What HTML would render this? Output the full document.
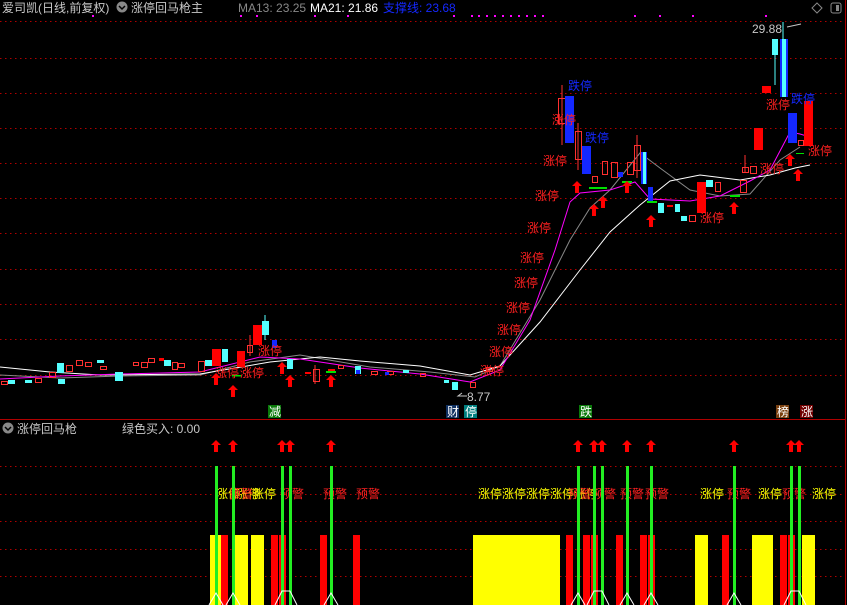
<!DOCTYPE html>
<html><head><meta charset="utf-8"><style>
html,body{margin:0;padding:0;background:#000;width:847px;height:605px;overflow:hidden}
svg{display:block}
text{font-family:"Liberation Sans","Noto Sans CJK SC",sans-serif;font-size:12px}
</style></head><body>
<svg width="847" height="605" viewBox="0 0 847 605">
<g stroke="#b00000" stroke-dasharray="1.5,3.5" stroke-width="1">
<line x1="0" y1="21.5" x2="845" y2="21.5"/><line x1="0" y1="58.5" x2="845" y2="58.5"/><line x1="0" y1="93.5" x2="845" y2="93.5"/><line x1="0" y1="128.5" x2="845" y2="128.5"/><line x1="0" y1="163.5" x2="845" y2="163.5"/><line x1="0" y1="198.5" x2="845" y2="198.5"/><line x1="0" y1="233.5" x2="845" y2="233.5"/><line x1="0" y1="269.5" x2="845" y2="269.5"/><line x1="0" y1="304.5" x2="845" y2="304.5"/><line x1="0" y1="339.5" x2="845" y2="339.5"/><line x1="0" y1="375.5" x2="845" y2="375.5"/>
<line x1="0" y1="466.5" x2="845" y2="466.5"/><line x1="0" y1="494.5" x2="845" y2="494.5"/><line x1="0" y1="521.5" x2="845" y2="521.5"/><line x1="0" y1="549.5" x2="845" y2="549.5"/><line x1="0" y1="576.5" x2="845" y2="576.5"/>
</g>
<line x1="0" y1="419.5" x2="845" y2="419.5" stroke="#b00000"/>
<line x1="845.5" y1="0" x2="845.5" y2="605" stroke="#b00000"/>
<!-- header -->
<text x="2" y="12" fill="#c8c8c8">爱司凯(日线,前复权)</text>
<circle cx="122" cy="7" r="5.5" fill="#888"/><path d="M119 6l3 3 3-3" stroke="#000" stroke-width="1.5" fill="none"/>
<text x="131" y="12" fill="#c8c8c8">涨停回马枪主</text>
<text x="238" y="12" fill="#888">MA13: 23.25</text>
<text x="310" y="12" fill="#fff">MA21: 21.86</text>
<text x="383" y="12" fill="#1428ff">支撑线: 23.68</text>
<g fill="#ff00ff">
<rect x="92" y="15" width="2" height="2"/><rect x="240" y="15" width="2" height="2"/><rect x="256" y="15" width="2" height="2"/><rect x="314" y="15" width="2" height="2"/><rect x="347" y="15" width="2" height="2"/><rect x="453" y="15" width="2" height="2"/><rect x="471" y="15" width="2" height="2"/><rect x="478" y="15" width="2" height="2"/><rect x="486" y="15" width="2" height="2"/><rect x="494" y="15" width="2" height="2"/><rect x="502" y="15" width="2" height="2"/><rect x="510" y="15" width="2" height="2"/><rect x="518" y="15" width="2" height="2"/><rect x="526" y="15" width="2" height="2"/><rect x="534" y="15" width="2" height="2"/><rect x="542" y="15" width="2" height="2"/><rect x="634" y="15" width="2" height="2"/><rect x="659" y="15" width="2" height="2"/><rect x="692" y="15" width="2" height="2"/><rect x="765" y="15" width="2" height="2"/>
</g>
<path d="M817 3l5 5-5 5-5-5z" stroke="#888" fill="none"/>
<rect x="831" y="3" width="10" height="10" rx="2" stroke="#888" fill="none"/><rect x="836" y="5" width="3" height="6" fill="#888"/>
<!-- MAs -->
<polyline fill="none" stroke="#888" points="0,375 60,378 120,376 200,375 250,362 300,355 370,367 430,372 475,377 500,366 540,300 570,240 590,208 610,190 640,153 660,168 690,190 720,196 750,194 780,160 800,147"/>
<polyline fill="none" stroke="#fff" points="0,367 50,372 100,375 200,374 270,362 320,357 360,361 420,366 470,375 500,366 540,322 580,270 610,232 640,205 670,181 700,175 740,180 770,175 795,168 810,165"/>
<polyline fill="none" stroke="#ff00ff" points="0,379 60,376 120,374 200,372 260,357 300,359 360,368 420,374 470,382 500,370 530,320 555,250 570,202 580,193 610,190 635,182 650,199 690,201 720,196 750,181 770,170 790,132 800,134 810,137"/>
<!-- candles left -->
<g fill="#55ffff">
<rect x="8" y="380" width="7" height="4"/><rect x="25" y="380" width="7" height="3"/><rect x="58" y="379" width="7" height="5"/><rect x="115" y="372" width="8" height="9"/><rect x="165" y="362" width="6" height="2"/><rect x="222" y="349" width="6" height="13"/><rect x="262" y="321" width="7" height="14"/><rect x="287" y="359" width="6" height="10"/><rect x="355" y="366" width="6" height="8"/><rect x="403" y="370" width="6" height="3"/><rect x="452" y="382" width="6" height="8"/><rect x="444" y="380" width="5" height="3"/>
<rect x="57" y="363" width="7" height="10"/><rect x="97" y="360" width="7" height="3"/><rect x="164" y="360" width="7" height="6"/><rect x="205" y="360" width="7" height="6"/>
</g>
<g fill="none" stroke="#ff3030">
<rect x="1.5" y="381.5" width="6" height="3"/><rect x="35.5" y="378.5" width="6" height="4"/><rect x="49.5" y="372.5" width="6" height="5"/><rect x="66.5" y="365.5" width="6" height="6"/><rect x="76.5" y="360.5" width="6" height="5"/><rect x="85.5" y="362.5" width="6" height="4"/><rect x="100.5" y="366.5" width="6" height="3"/><rect x="133.5" y="362.5" width="5" height="3"/><rect x="141.5" y="362.5" width="6" height="5"/><rect x="148.5" y="358.5" width="6" height="4"/><rect x="172.5" y="362.5" width="5" height="7"/><rect x="178.5" y="363.5" width="6" height="4"/><rect x="198.5" y="361.5" width="6" height="10"/><rect x="247.5" y="345.5" width="5" height="7"/><rect x="313.5" y="369.5" width="6" height="12"/><rect x="338.5" y="365.5" width="5" height="3"/><rect x="371.5" y="371.5" width="6" height="3"/><rect x="387.5" y="371.5" width="6" height="3"/><rect x="420.5" y="373.5" width="5" height="3"/><rect x="470.5" y="382.5" width="5" height="5"/><rect x="486.5" y="367.5" width="6" height="4"/>
<line x1="250" y1="335" x2="250" y2="356"/><line x1="315" y1="365" x2="315" y2="384"/>
</g>
<g fill="#ff0000">
<rect x="212" y="349" width="9" height="17"/><rect x="237" y="351" width="8" height="16"/><rect x="253" y="325" width="9" height="20"/><rect x="305" y="372" width="6" height="2"/><rect x="328" y="369" width="7" height="2"/><rect x="159" y="358" width="5" height="3"/>
</g>
<g fill="#1428ff"><rect x="272" y="340" width="5" height="8"/><rect x="356" y="370" width="4" height="4"/><rect x="385" y="372" width="4" height="3"/></g>
<line x1="265" y1="315" x2="265" y2="340" stroke="#55ffff"/>
<!-- candles right -->
<g fill="none" stroke="#ff3030">
<rect x="558.5" y="98.5" width="7" height="25"/><line x1="562" y1="85" x2="562" y2="145"/>
<rect x="575.5" y="131.5" width="6" height="28"/><line x1="578" y1="123" x2="578" y2="170"/>
<rect x="592.5" y="176.5" width="5" height="6"/><rect x="602.5" y="161.5" width="5" height="13"/><rect x="611.5" y="162.5" width="6" height="15"/><rect x="627.5" y="162.5" width="6" height="12"/><rect x="634.5" y="145.5" width="6" height="25"/><line x1="637" y1="135" x2="637" y2="178"/>
<rect x="689.5" y="215.5" width="6" height="6"/><rect x="715.5" y="182.5" width="5" height="9"/><rect x="740.5" y="180.5" width="6" height="12"/><rect x="750.5" y="166.5" width="6" height="7"/><rect x="798.5" y="140.5" width="5" height="5"/><rect x="742.5" y="167.5" width="6" height="5"/><line x1="745" y1="155" x2="745" y2="172"/>
</g>
<g fill="#ff0000">
<rect x="697" y="182" width="9" height="31"/><rect x="754" y="128" width="9" height="22"/><rect x="762" y="86" width="9" height="7"/><rect x="804" y="101" width="9" height="45"/><rect x="667" y="205" width="6" height="2"/>
</g>
<g fill="#1428ff">
<rect x="565" y="96" width="9" height="47"/><rect x="582" y="146" width="9" height="28"/><rect x="618" y="172" width="5" height="5"/><rect x="641" y="152" width="6" height="32"/><rect x="648" y="187" width="5" height="16"/><rect x="788" y="113" width="9" height="30"/>
</g>
<g fill="#55ffff">
<rect x="643" y="152" width="3" height="32"/><rect x="658" y="203" width="6" height="10"/><rect x="675" y="204" width="5" height="8"/><rect x="681" y="216" width="6" height="5"/><rect x="706" y="180" width="7" height="7"/><rect x="772" y="39" width="6" height="16"/><rect x="782" y="39" width="4" height="58"/>
<line x1="783" y1="22" x2="783" y2="40" stroke="#55ffff"/><line x1="775" y1="55" x2="775" y2="85" stroke="#55ffff"/>
</g>
<rect x="780" y="39" width="2" height="58" fill="#1428ff"/><rect x="786" y="39" width="2" height="58" fill="#1428ff"/>
<g fill="#00e000"><rect x="589" y="187" width="18" height="2"/><rect x="622" y="181" width="10" height="2"/><rect x="647" y="201" width="10" height="2"/><rect x="730" y="195" width="10" height="2"/><rect x="232" y="375" width="9" height="1.5"/><rect x="326" y="371" width="10" height="2"/><rect x="796" y="153" width="8" height="1"/></g>
<text x="752" y="33" fill="#c8c8c8">29.88</text><path d="M787 27l14-3" stroke="#c8c8c8" fill="none"/>
<text x="467" y="401" fill="#c8c8c8">8.77</text><path d="M467 396h-9l4-3" stroke="#c8c8c8" fill="none"/>
<!-- labels 涨停 -->
<g fill="#ff2020">
<text x="552" y="124">涨停</text><text x="543" y="165">涨停</text><text x="535" y="200">涨停</text><text x="527" y="232">涨停</text><text x="520" y="262">涨停</text><text x="514" y="287">涨停</text><text x="506" y="312">涨停</text><text x="497" y="334">涨停</text><text x="489" y="356">涨停</text><text x="480" y="375">涨停</text>
<text x="700" y="222">涨停</text><text x="766" y="109">涨停</text><text x="760" y="173">涨停</text><text x="808" y="155">涨停</text>
<text x="215" y="377">涨停</text><text x="240" y="377">涨停</text><text x="258" y="355">涨停</text>
</g>
<g fill="#1428ff"><text x="568" y="90">跌停</text><text x="585" y="142">跌停</text><text x="791" y="103">跌停</text></g>
<!-- up arrows main -->
<g fill="#ff0000">
<path d="M577 181l5 5h-3v7h-4v-7h-3z"/><path d="M603 196l5 5h-3v7h-4v-7h-3z"/><path d="M594 204l5 5h-3v7h-4v-7h-3z"/><path d="M627 181l5 5h-3v7h-4v-7h-3z"/><path d="M651 215l5 5h-3v7h-4v-7h-3z"/><path d="M734 202l5 5h-3v7h-4v-7h-3z"/><path d="M790 154l5 5h-3v7h-4v-7h-3z"/><path d="M798 169l5 5h-3v7h-4v-7h-3z"/>
<path d="M216 373l5 5h-3v7h-4v-7h-3z"/><path d="M233 385l5 5h-3v7h-4v-7h-3z"/><path d="M282 362l5 5h-3v7h-4v-7h-3z"/><path d="M290 375l5 5h-3v7h-4v-7h-3z"/><path d="M331 375l5 5h-3v7h-4v-7h-3z"/>
</g>
<!-- bottom label boxes -->
<rect x="268" y="405" width="13" height="13" fill="#0a7a0a"/><text x="269" y="416" fill="#fff">减</text>
<rect x="446" y="405" width="13" height="13" fill="#103060"/><text x="447" y="416" fill="#fff">财</text>
<rect x="464" y="405" width="13" height="13" fill="#008080"/><text x="465" y="416" fill="#fff">停</text>
<rect x="579" y="405" width="13" height="13" fill="#0a7a0a"/><text x="580" y="416" fill="#fff">跌</text>
<rect x="776" y="405" width="13" height="13" fill="#7a4010"/><text x="777" y="416" fill="#fff">榜</text>
<rect x="800" y="405" width="13" height="13" fill="#700000"/><text x="801" y="416" fill="#fff">涨</text>
<!-- lower panel -->
<circle cx="8" cy="428" r="5.5" fill="#888"/><path d="M5 427l3 3 3-3" stroke="#000" stroke-width="1.5" fill="none"/>
<text x="17" y="433" fill="#c8c8c8">涨停回马枪</text>
<text x="122" y="433" fill="#c8c8c8">绿色买入: 0.00</text>
<g fill="#ffff00">
<rect x="210" y="535" width="11" height="70"/><rect x="235" y="535" width="13" height="70"/><rect x="251" y="535" width="13" height="70"/>
<rect x="473" y="535" width="87" height="70"/><rect x="695" y="535" width="13" height="70"/><rect x="752" y="535" width="21" height="70"/><rect x="802" y="535" width="13" height="70"/>
</g>
<g fill="#ff0000">
<rect x="221" y="535" width="7" height="70"/><rect x="271" y="535" width="7" height="70"/><rect x="279" y="535" width="7" height="70"/><rect x="320" y="535" width="7" height="70"/><rect x="353" y="535" width="7" height="70"/>
<rect x="566" y="535" width="7" height="70"/><rect x="583" y="535" width="7" height="70"/><rect x="591" y="535" width="7" height="70"/><rect x="616" y="535" width="7" height="70"/><rect x="640" y="535" width="7" height="70"/><rect x="648" y="535" width="7" height="70"/><rect x="722" y="535" width="7" height="70"/><rect x="780" y="535" width="7" height="70"/><rect x="788" y="535" width="7" height="70"/>
</g>
<g fill="#ffff00"><text x="216" y="498">涨停</text><text x="236" y="498">涨停</text><text x="252" y="498">涨停</text><text x="478" y="498">涨停涨停涨停涨停涨停</text><text x="700" y="498">涨停</text><text x="758" y="498">涨停</text><text x="812" y="498">涨停</text></g>
<g fill="#ff2020"><text x="229" y="498">预警</text><text x="280" y="498">预警</text><text x="323" y="498">预警</text><text x="356" y="498">预警</text><text x="568" y="498">预警</text><text x="592" y="498">预警</text><text x="620" y="498">预警</text><text x="645" y="498">预警</text><text x="727" y="498">预警</text><text x="782" y="498">预警</text></g>
<g fill="#22ee22">
<rect x="215" y="466" width="3" height="139"/><rect x="232" y="466" width="3" height="139"/><rect x="281" y="466" width="3" height="139"/><rect x="289" y="466" width="3" height="139"/><rect x="330" y="466" width="3" height="139"/>
<rect x="577" y="466" width="3" height="139"/><rect x="593" y="466" width="3" height="139"/><rect x="601" y="466" width="3" height="139"/><rect x="626" y="466" width="3" height="139"/><rect x="650" y="466" width="3" height="139"/><rect x="733" y="466" width="3" height="139"/><rect x="790" y="466" width="3" height="139"/><rect x="798" y="466" width="3" height="139"/>
</g>
<g fill="#ff0000">
<path d="M216 440l5 5h-3v7h-4v-7h-3z"/><path d="M233 440l5 5h-3v7h-4v-7h-3z"/><path d="M282 440l5 5h-3v7h-4v-7h-3z"/><path d="M290 440l5 5h-3v7h-4v-7h-3z"/><path d="M331 440l5 5h-3v7h-4v-7h-3z"/>
<path d="M578 440l5 5h-3v7h-4v-7h-3z"/><path d="M594 440l5 5h-3v7h-4v-7h-3z"/><path d="M602 440l5 5h-3v7h-4v-7h-3z"/><path d="M627 440l5 5h-3v7h-4v-7h-3z"/><path d="M651 440l5 5h-3v7h-4v-7h-3z"/><path d="M734 440l5 5h-3v7h-4v-7h-3z"/><path d="M791 440l5 5h-3v7h-4v-7h-3z"/><path d="M799 440l5 5h-3v7h-4v-7h-3z"/>
</g>
<g stroke="#fff" fill="none">
<polyline points="209,605 216,593 223,605"/><polyline points="226,605 233,593 240,605"/><polyline points="275,605 282,591 290,591 297,605"/><polyline points="324,605 331,593 338,605"/>
<polyline points="571,605 578,593 585,605"/><polyline points="587,605 594,591 602,591 609,605"/><polyline points="620,605 627,593 634,605"/><polyline points="644,605 651,593 658,605"/><polyline points="727,605 734,593 741,605"/><polyline points="784,605 791,591 799,591 806,605"/>
</g>
</svg>
</body></html>
